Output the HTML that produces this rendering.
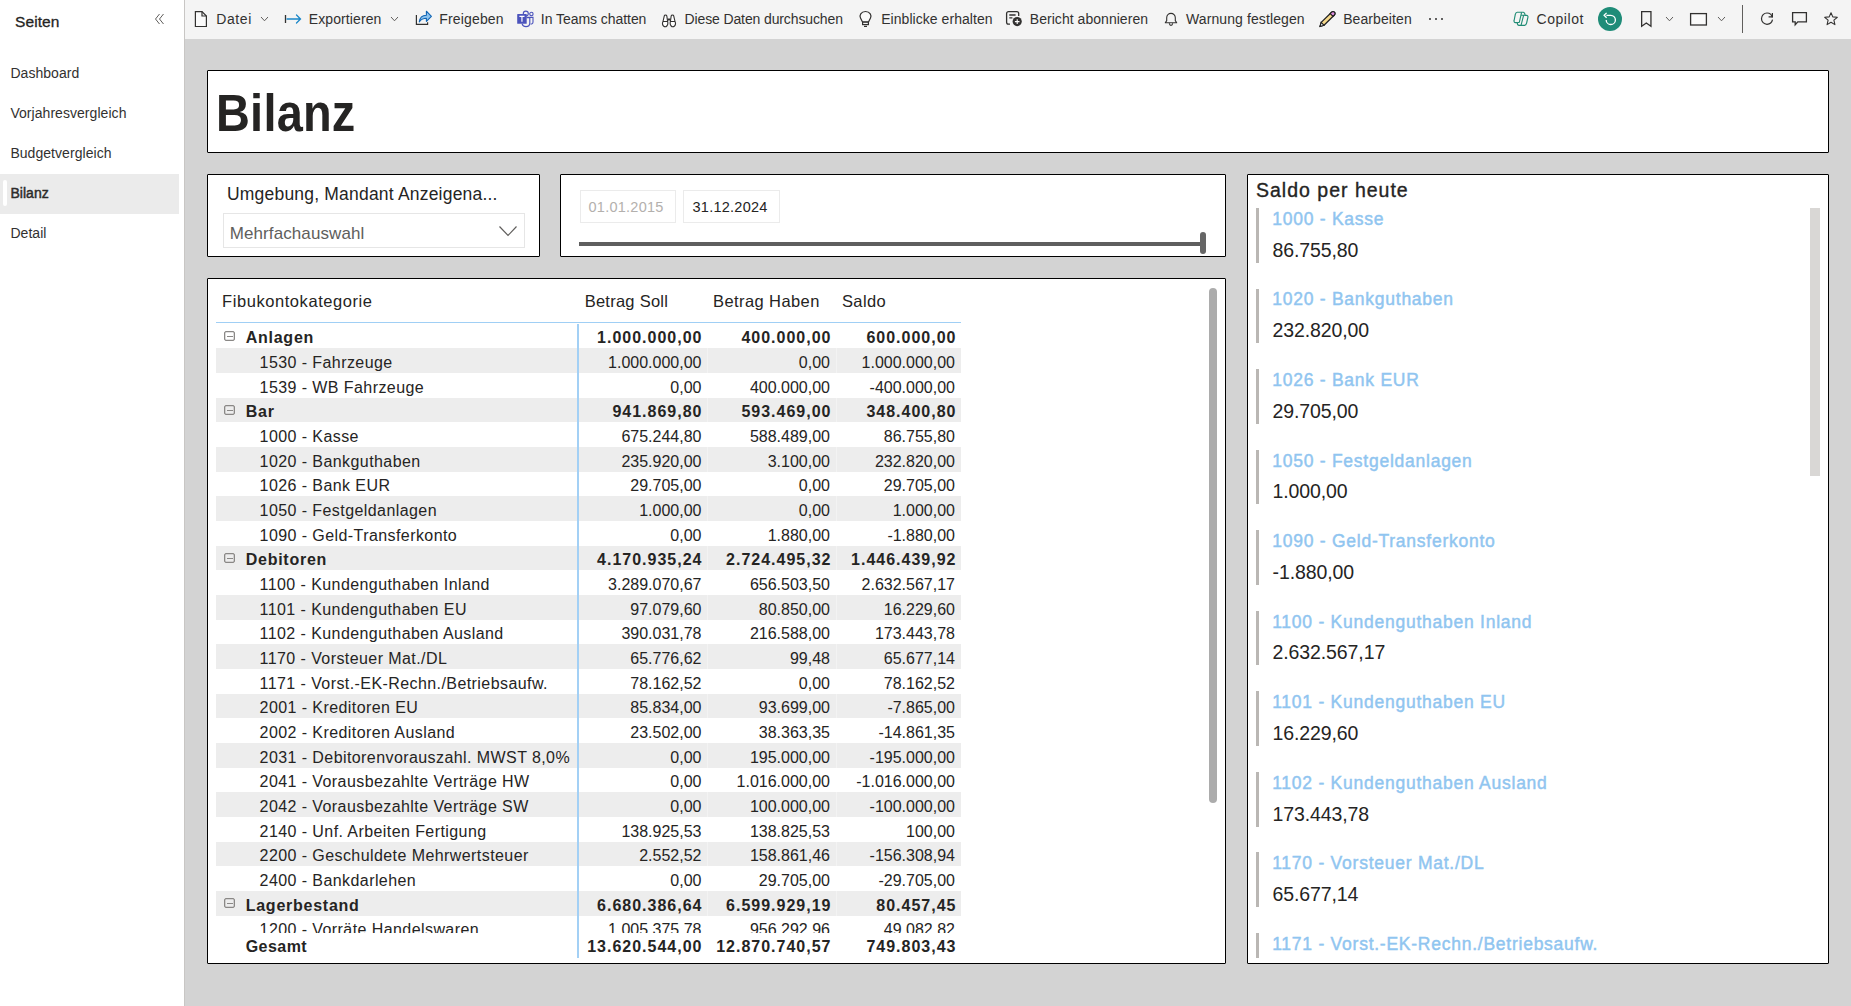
<!DOCTYPE html>
<html><head><meta charset="utf-8"><title>Bilanz</title>
<style>
html,body{margin:0;padding:0;width:1851px;height:1006px;overflow:hidden;background:#fff;font-family:"Liberation Sans", sans-serif;}
.t{position:absolute;white-space:nowrap;line-height:1;}
</style></head><body>
<div style="position:absolute;left:0px;top:0px;width:184px;height:1006px;background:#fff"></div><div style="position:absolute;left:184px;top:0px;width:1px;height:1006px;background:#c8c6c4"></div><div style="position:absolute;left:185px;top:0px;width:1666px;height:39px;background:#f4f4f4"></div><div style="position:absolute;left:185px;top:39px;width:1666px;height:967px;background:#d3d3d3"></div><div class="t" style="left:15.00px;top:13.78px;font-size:15.5px;font-weight:400;color:#252423;letter-spacing:0.1px;-webkit-text-stroke:0.3px #252423;">Seiten</div><svg style="position:absolute;left:154px;top:13px" width="11" height="12" viewBox="0 0 11 12"><path d="M5.5 1 L1.5 6 L5.5 11 M9.5 1 L5.5 6 L9.5 11" fill="none" stroke="#605e5c" stroke-width="1"/></svg><div style="position:absolute;left:0px;top:174px;width:179px;height:40px;background:#ebebeb"></div><div style="position:absolute;left:3px;top:180px;width:4px;height:26px;background:#fff;border-radius:2px"></div><div class="t" style="left:10.40px;top:65.95px;font-size:14px;font-weight:400;color:#323130;letter-spacing:0.05px;">Dashboard</div><div class="t" style="left:10.40px;top:105.95px;font-size:14px;font-weight:400;color:#323130;letter-spacing:0.05px;">Vorjahresvergleich</div><div class="t" style="left:10.40px;top:145.95px;font-size:14px;font-weight:400;color:#323130;letter-spacing:0.05px;">Budgetvergleich</div><div class="t" style="left:10.40px;top:186.15px;font-size:14px;font-weight:400;color:#323130;letter-spacing:0.05px;-webkit-text-stroke:0.45px #252423;">Bilanz</div><div class="t" style="left:10.40px;top:226.15px;font-size:14px;font-weight:400;color:#323130;letter-spacing:0.05px;">Detail</div><div class="t" style="left:216.20px;top:12.35px;font-size:14px;font-weight:400;color:#323130;letter-spacing:0.6px;">Datei</div><div class="t" style="left:308.80px;top:12.35px;font-size:14px;font-weight:400;color:#323130;letter-spacing:0.1px;">Exportieren</div><div class="t" style="left:439.30px;top:12.35px;font-size:14px;font-weight:400;color:#323130;letter-spacing:0.15px;">Freigeben</div><div class="t" style="left:540.80px;top:12.35px;font-size:14px;font-weight:400;color:#323130;letter-spacing:-0.05px;">In Teams chatten</div><div class="t" style="left:684.50px;top:12.35px;font-size:14px;font-weight:400;color:#323130;letter-spacing:-0.12px;">Diese Daten durchsuchen</div><div class="t" style="left:881.20px;top:12.35px;font-size:14px;font-weight:400;color:#323130;letter-spacing:0.05px;">Einblicke erhalten</div><div class="t" style="left:1029.80px;top:12.35px;font-size:14px;font-weight:400;color:#323130;letter-spacing:0.04px;">Bericht abonnieren</div><div class="t" style="left:1186.00px;top:12.35px;font-size:14px;font-weight:400;color:#323130;letter-spacing:0.1px;">Warnung festlegen</div><div class="t" style="left:1343.20px;top:12.35px;font-size:14px;font-weight:400;color:#323130;letter-spacing:0.09px;">Bearbeiten</div><div class="t" style="left:1536.50px;top:12.35px;font-size:14px;font-weight:400;color:#323130;letter-spacing:0.55px;">Copilot</div><svg style="position:absolute;left:260px;top:15.9px" width="9" height="5.8" viewBox="-1 -1 9 5.8"><path d="M0 0 L3.5 3.8 L7 0" fill="none" stroke="#605e5c" stroke-width="1"/></svg><svg style="position:absolute;left:390px;top:15.9px" width="9" height="5.8" viewBox="-1 -1 9 5.8"><path d="M0 0 L3.5 3.8 L7 0" fill="none" stroke="#605e5c" stroke-width="1"/></svg><svg style="position:absolute;left:1664.5px;top:15.9px" width="9" height="5.8" viewBox="-1 -1 9 5.8"><path d="M0 0 L3.5 3.8 L7 0" fill="none" stroke="#605e5c" stroke-width="1"/></svg><svg style="position:absolute;left:1716.5px;top:15.9px" width="9" height="5.8" viewBox="-1 -1 9 5.8"><path d="M0 0 L3.5 3.8 L7 0" fill="none" stroke="#605e5c" stroke-width="1"/></svg><svg style="position:absolute;left:194px;top:10px" width="15" height="18" viewBox="0 0 15 18"><path d="M1.4 1.6 H8 L12.4 6 V16.5 H1.4 Z" fill="#fafafa" stroke="#323130" stroke-width="1.2" stroke-linejoin="miter"/><path d="M8 1.6 V6 H12.4" fill="none" stroke="#323130" stroke-width="1.2"/></svg><svg style="position:absolute;left:284px;top:12px" width="19" height="14" viewBox="0 0 19 14"><path d="M1.5 3 V11" stroke="#323130" stroke-width="1.3"/><path d="M3 7 H16.5 M12.5 3 L16.5 7 L12.5 11" fill="none" stroke="#1a86c8" stroke-width="1.3" stroke-linecap="round"/></svg><svg style="position:absolute;left:414px;top:10px" width="19" height="17" viewBox="0 0 19 17"><path d="M2.4 5 V14.4 H13.6 V12.2" fill="none" stroke="#323130" stroke-width="1.2"/><path d="M5.3 11.8 C5.8 7.5 8.5 5.3 12.4 5.2 V1.2 L17.4 6.3 L12.4 11.3 V8.3 C9.2 8.3 7 9.6 5.3 11.8 Z" fill="#8cc3ef" stroke="#0f64b4" stroke-width="1.1" stroke-linejoin="round"/></svg><svg style="position:absolute;left:516px;top:10px" width="19" height="18" viewBox="0 0 19 18"><circle cx="9.8" cy="3.6" r="2.5" fill="none" stroke="#4b53bc" stroke-width="1.15"/><circle cx="15.4" cy="4" r="1.7" fill="none" stroke="#4b53bc" stroke-width="1.1"/><path d="M11.5 7.4 H17 V12 C17 13.4 15.8 14.2 14.5 14" fill="none" stroke="#4b53bc" stroke-width="1.1"/><path d="M10.5 7.6 H13.8 V13 C13.8 15.2 12 16.6 10 16.6 C8 16.6 6.6 15.4 6.1 13.8" fill="none" stroke="#4b53bc" stroke-width="1.15"/><rect x="1.2" y="4" width="9.5" height="9.8" fill="#4b53bc" rx="0.6"/><path d="M3.4 6.3 H8.5 M5.95 6.3 V11.8" stroke="#fff" stroke-width="1.2"/></svg><svg style="position:absolute;left:661px;top:14px" width="16" height="14" viewBox="0 0 16 14"><path d="M2 7.5 L3.3 1.8 C3.5 0.8 5.5 0.8 5.8 1.8 L6.6 7.5 M6.6 7.5 C7 9 6.8 11 5.8 12 C5 12.8 3.5 12.8 2.5 12 C1.5 11 1.3 9 2 7.5 Z M9.4 7.5 L10.2 1.8 C10.5 0.8 12.5 0.8 12.7 1.8 L14 7.5 M14 7.5 C14.7 9 14.5 11 13.5 12 C12.5 12.8 11 12.8 10.2 12 C9.2 11 9 9 9.4 7.5 Z M2 7.5 H6.6 M9.4 7.5 H14" fill="#fff" stroke="#323130" stroke-width="1.1"/><rect x="6.6" y="4.5" width="2.8" height="2" fill="#323130"/></svg><svg style="position:absolute;left:858px;top:10px" width="15" height="18" viewBox="0 0 15 18"><path d="M4.5 12 L2.5 8 C1.2 5.5 2.8 1.5 7.5 1.5 C12.2 1.5 13.8 5.5 12.5 8 L10.5 12 Z" fill="#fafafa" stroke="#323130" stroke-width="1.2" stroke-linejoin="round"/><rect x="4.6" y="12" width="5.8" height="2.6" fill="none" stroke="#323130" stroke-width="1.2"/><path d="M6 16.4 H9" stroke="#323130" stroke-width="1.2"/></svg><svg style="position:absolute;left:1005px;top:10px" width="19" height="18" viewBox="0 0 19 18"><path d="M5 14.2 H3.5 C2.5 14.2 1.6 13.3 1.6 12.3 V3.6 C1.6 2.6 2.5 1.7 3.5 1.7 H11.8 C12.8 1.7 13.7 2.6 13.7 3.6 V6" fill="none" stroke="#323130" stroke-width="1.3"/><path d="M4.3 5 H10.6 M4.3 7.8 H7.4" stroke="#323130" stroke-width="1.3"/><circle cx="12.2" cy="11.6" r="4.6" fill="#323130"/><path d="M12.2 9.3 V13.9 M9.9 11.6 H14.5" stroke="#fff" stroke-width="1.1"/></svg><svg style="position:absolute;left:1164px;top:12px" width="14" height="15" viewBox="0 0 14 15"><path d="M1.3 10.8 H12.7 L11.3 8.6 V5.8 C11.3 3.3 9.4 1.4 7 1.4 C4.6 1.4 2.7 3.3 2.7 5.8 V8.6 Z" fill="none" stroke="#323130" stroke-width="1.1" stroke-linejoin="round"/><path d="M5.3 11.3 C5.5 12.8 6.2 13.4 7 13.4 C7.8 13.4 8.5 12.8 8.7 11.3" fill="none" stroke="#323130" stroke-width="1.1"/></svg><svg style="position:absolute;left:1318px;top:10px" width="19" height="18" viewBox="0 0 19 18"><path d="M2 16.5 L3.2 12.4 L13.6 2.2 C14.4 1.4 15.6 1.4 16.4 2.2 C17.2 3 17.2 4.2 16.4 5 L6 15.3 Z" fill="#f7d98b" stroke="#1f1f1f" stroke-width="1.2" stroke-linejoin="round"/><path d="M13.6 2.2 C14.4 1.4 15.6 1.4 16.4 2.2 C17.2 3 17.2 4.2 16.4 5 L15 6.4 L12.2 3.6 Z" fill="#e08de0" stroke="#1f1f1f" stroke-width="1.2"/><path d="M3.2 12.4 L6 15.3 L2 16.5 Z" fill="#fff" stroke="#1f1f1f" stroke-width="1.1"/></svg><div style="position:absolute;left:1429px;top:18px;width:2.4px;height:2.4px;background:#323130;border-radius:50%"></div><div style="position:absolute;left:1435px;top:18px;width:2.4px;height:2.4px;background:#323130;border-radius:50%"></div><div style="position:absolute;left:1441px;top:18px;width:2.4px;height:2.4px;background:#323130;border-radius:50%"></div><svg style="position:absolute;left:1508px;top:6px" width="26" height="26" viewBox="0 0 26 26"><path d="M9.2 6.2 H15.2 C16.2 6.2 16.9 7.2 17.2 9.3 H18.6 C19.6 9.3 20.2 10.3 19.9 11.4 L18.6 17.2 C18.3 18.5 17.6 19.4 16.4 19.4 H10.9 C10 19.4 9.4 18.4 9.2 16.6 H7.4 C6.4 16.6 5.8 15.6 6.1 14.5 L7.3 8.4 C7.6 7 8.2 6.2 9.2 6.2 Z" fill="none" stroke="#1f8c74" stroke-width="1.15" stroke-linejoin="round"/><path d="M13.6 6.4 L11.3 16.4 M15.6 9.4 L13.1 19.2 M13.2 9.3 H17.2 M9.2 16.5 H11.5" fill="none" stroke="#1f8c74" stroke-width="1.1"/></svg><svg style="position:absolute;left:1598px;top:7px" width="24" height="24" viewBox="0 0 24 24"><circle cx="12" cy="12" r="12" fill="#1f8c78"/><path d="M8.4 8.3 H12.8 A4.6 4.6 0 1 1 8.2 12.9" fill="none" stroke="#fff" stroke-width="1.3"/><path d="M8.6 5.9 L6.1 8.3 L8.6 10.7" fill="none" stroke="#fff" stroke-width="1.3"/></svg><svg style="position:absolute;left:1640px;top:10px" width="13" height="18" viewBox="0 0 13 18"><path d="M1.65 1.65 H10.95 V16.2 L6.3 13 L1.65 16.2 Z" fill="none" stroke="#323130" stroke-width="1.3" stroke-linejoin="miter"/></svg><svg style="position:absolute;left:1689px;top:12px" width="19" height="15" viewBox="0 0 19 15"><rect x="1.6" y="1.6" width="15.8" height="11.4" fill="#fafafa" stroke="#323130" stroke-width="1.3"/></svg><div style="position:absolute;left:1742px;top:5px;width:1px;height:28px;background:#605e5c"></div><svg style="position:absolute;left:1759px;top:11px" width="16" height="16" viewBox="0 0 16 16"><path d="M13.3 6.3 C12.8 3.8 10.7 2 8 2 C5 2 2.5 4.5 2.5 7.7 C2.5 10.8 5 13.3 8 13.3 C10.8 13.3 13 11.3 13.5 8.7" fill="none" stroke="#323130" stroke-width="1.2"/><path d="M13.4 2 V5.8 H9.6" fill="none" stroke="#323130" stroke-width="1.2"/></svg><svg style="position:absolute;left:1791px;top:11px" width="17" height="16" viewBox="0 0 17 16"><path d="M1.6 1.6 H15.4 V10.8 H6.8 L4.2 13.8 V10.8 H1.6 Z" fill="none" stroke="#323130" stroke-width="1.3" stroke-linejoin="miter"/></svg><svg style="position:absolute;left:1823px;top:11px" width="16" height="16" viewBox="0 0 16 16"><path d="M8 1.8 L9.8 5.9 L14.3 6.3 L10.9 9.2 L11.9 13.6 L8 11.3 L4.1 13.6 L5.1 9.2 L1.7 6.3 L6.2 5.9 Z" fill="none" stroke="#323130" stroke-width="1.1" stroke-linejoin="round"/></svg><div style="position:absolute;left:207px;top:70px;width:1622px;height:83px;background:#fff;border:1px solid #000;box-sizing:border-box;border-radius:1px"></div><div class="t" style="left:216.30px;top:87.63px;font-size:51px;font-weight:700;color:#252423;letter-spacing:0.25px;transform:scaleX(0.92);transform-origin:0 0;">Bilanz</div><div style="position:absolute;left:207px;top:174px;width:333px;height:83px;background:#fff;border:1px solid #000;box-sizing:border-box;border-radius:1px"></div><div class="t" style="left:227.00px;top:185.69px;font-size:17.5px;font-weight:400;color:#252423;letter-spacing:0.2px;">Umgebung, Mandant Anzeigena...</div><div style="position:absolute;left:223px;top:213px;width:302px;height:35px;border:1px solid #e6e6e6;box-sizing:border-box"></div><div class="t" style="left:229.70px;top:224.61px;font-size:17px;font-weight:400;color:#605e5c;letter-spacing:0.1px;">Mehrfachauswahl</div><svg style="position:absolute;left:498px;top:225px" width="20" height="13" viewBox="0 0 20 13"><path d="M1.5 1.5 L10 10.5 L18.5 1.5" fill="none" stroke="#605e5c" stroke-width="1.2"/></svg><div style="position:absolute;left:560px;top:174px;width:666px;height:83px;background:#fff;border:1px solid #000;box-sizing:border-box;border-radius:1px"></div><div style="position:absolute;left:579.5px;top:189.7px;width:96.3px;height:33.5px;border:1px solid #ebebeb;box-sizing:border-box"></div><div style="position:absolute;left:683.4px;top:189.7px;width:96.3px;height:33.5px;border:1px solid #ebebeb;box-sizing:border-box"></div><div class="t" style="left:588.50px;top:200.23px;font-size:14.5px;font-weight:400;color:#b3b0ad;letter-spacing:0.25px;">01.01.2015</div><div class="t" style="left:692.50px;top:200.23px;font-size:14.5px;font-weight:400;color:#252423;letter-spacing:0.25px;">31.12.2024</div><div style="position:absolute;left:579px;top:241.6px;width:624px;height:4px;background:#5f5f5f"></div><div style="position:absolute;left:1200px;top:232.4px;width:6px;height:22px;background:#666;border-radius:3px"></div><div style="position:absolute;left:207px;top:278px;width:1019px;height:686px;background:#fff;border:1px solid #000;box-sizing:border-box;border-radius:1px"></div><div class="t" style="left:222.00px;top:293.03px;font-size:16.5px;font-weight:400;color:#252423;letter-spacing:0.57px;">Fibukontokategorie</div><div class="t" style="left:584.70px;top:293.03px;font-size:16.5px;font-weight:400;color:#252423;letter-spacing:0.25px;">Betrag Soll</div><div class="t" style="left:713.10px;top:293.03px;font-size:16.5px;font-weight:400;color:#252423;letter-spacing:0.4px;">Betrag Haben</div><div class="t" style="left:842.00px;top:293.03px;font-size:16.5px;font-weight:400;color:#252423;letter-spacing:0.35px;">Saldo</div><div style="position:absolute;left:216px;top:321.8px;width:745px;height:1.6px;background:#a0cff5"></div><div style="position:absolute;left:0;top:323px;width:1851px;height:610px;overflow:hidden"><div style="position:absolute;left:224px;top:7.90px;width:11px;height:10.2px;border:1px solid #8a8886;box-sizing:border-box;border-radius:2px;box-shadow:inset 0 0 0 0.3px #8a8886"></div><div style="position:absolute;left:226.5px;top:12.70px;width:6px;height:1px;background:#8a8886"></div><div class="t" style="left:245.70px;top:7.16px;font-size:16px;font-weight:700;color:#252423;letter-spacing:0.75px">Anlagen</div><div class="t" style="right:1148.50px;top:7.16px;font-size:16px;font-weight:700;color:#252423;letter-spacing:1.0px">1.000.000,00</div><div class="t" style="right:1019.50px;top:7.16px;font-size:16px;font-weight:700;color:#252423;letter-spacing:1.0px">400.000,00</div><div class="t" style="right:894.50px;top:7.16px;font-size:16px;font-weight:700;color:#252423;letter-spacing:1.0px">600.000,00</div><div style="position:absolute;left:216px;top:25.37px;width:745px;height:24.67px;background:#ededed"></div><div style="position:absolute;left:707px;top:25.37px;width:1px;height:24.67px;background:#f3f3f3"></div><div style="position:absolute;left:836px;top:25.37px;width:1px;height:24.67px;background:#f3f3f3"></div><div class="t" style="left:259.60px;top:31.83px;font-size:16px;font-weight:400;color:#252423;letter-spacing:0.42px">1530 - Fahrzeuge</div><div class="t" style="right:1149.50px;top:31.83px;font-size:16px;font-weight:400;color:#252423;letter-spacing:0px">1.000.000,00</div><div class="t" style="right:1021.00px;top:31.83px;font-size:16px;font-weight:400;color:#252423;letter-spacing:0px">0,00</div><div class="t" style="right:896.00px;top:31.83px;font-size:16px;font-weight:400;color:#252423;letter-spacing:0px">1.000.000,00</div><div class="t" style="left:259.60px;top:56.50px;font-size:16px;font-weight:400;color:#252423;letter-spacing:0.42px">1539 - WB Fahrzeuge</div><div class="t" style="right:1149.50px;top:56.50px;font-size:16px;font-weight:400;color:#252423;letter-spacing:0px">0,00</div><div class="t" style="right:1021.00px;top:56.50px;font-size:16px;font-weight:400;color:#252423;letter-spacing:0px">400.000,00</div><div class="t" style="right:896.00px;top:56.50px;font-size:16px;font-weight:400;color:#252423;letter-spacing:0px">-400.000,00</div><div style="position:absolute;left:216px;top:74.71px;width:745px;height:24.67px;background:#ededed"></div><div style="position:absolute;left:707px;top:74.71px;width:1px;height:24.67px;background:#f3f3f3"></div><div style="position:absolute;left:836px;top:74.71px;width:1px;height:24.67px;background:#f3f3f3"></div><div style="position:absolute;left:224px;top:81.91px;width:11px;height:10.2px;border:1px solid #8a8886;box-sizing:border-box;border-radius:2px;box-shadow:inset 0 0 0 0.3px #8a8886"></div><div style="position:absolute;left:226.5px;top:86.71px;width:6px;height:1px;background:#8a8886"></div><div class="t" style="left:245.70px;top:81.17px;font-size:16px;font-weight:700;color:#252423;letter-spacing:0.75px">Bar</div><div class="t" style="right:1148.50px;top:81.17px;font-size:16px;font-weight:700;color:#252423;letter-spacing:1.0px">941.869,80</div><div class="t" style="right:1019.50px;top:81.17px;font-size:16px;font-weight:700;color:#252423;letter-spacing:1.0px">593.469,00</div><div class="t" style="right:894.50px;top:81.17px;font-size:16px;font-weight:700;color:#252423;letter-spacing:1.0px">348.400,80</div><div class="t" style="left:259.60px;top:105.84px;font-size:16px;font-weight:400;color:#252423;letter-spacing:0.42px">1000 - Kasse</div><div class="t" style="right:1149.50px;top:105.84px;font-size:16px;font-weight:400;color:#252423;letter-spacing:0px">675.244,80</div><div class="t" style="right:1021.00px;top:105.84px;font-size:16px;font-weight:400;color:#252423;letter-spacing:0px">588.489,00</div><div class="t" style="right:896.00px;top:105.84px;font-size:16px;font-weight:400;color:#252423;letter-spacing:0px">86.755,80</div><div style="position:absolute;left:216px;top:124.05px;width:745px;height:24.67px;background:#ededed"></div><div style="position:absolute;left:707px;top:124.05px;width:1px;height:24.67px;background:#f3f3f3"></div><div style="position:absolute;left:836px;top:124.05px;width:1px;height:24.67px;background:#f3f3f3"></div><div class="t" style="left:259.60px;top:130.51px;font-size:16px;font-weight:400;color:#252423;letter-spacing:0.42px">1020 - Bankguthaben</div><div class="t" style="right:1149.50px;top:130.51px;font-size:16px;font-weight:400;color:#252423;letter-spacing:0px">235.920,00</div><div class="t" style="right:1021.00px;top:130.51px;font-size:16px;font-weight:400;color:#252423;letter-spacing:0px">3.100,00</div><div class="t" style="right:896.00px;top:130.51px;font-size:16px;font-weight:400;color:#252423;letter-spacing:0px">232.820,00</div><div class="t" style="left:259.60px;top:155.18px;font-size:16px;font-weight:400;color:#252423;letter-spacing:0.42px">1026 - Bank EUR</div><div class="t" style="right:1149.50px;top:155.18px;font-size:16px;font-weight:400;color:#252423;letter-spacing:0px">29.705,00</div><div class="t" style="right:1021.00px;top:155.18px;font-size:16px;font-weight:400;color:#252423;letter-spacing:0px">0,00</div><div class="t" style="right:896.00px;top:155.18px;font-size:16px;font-weight:400;color:#252423;letter-spacing:0px">29.705,00</div><div style="position:absolute;left:216px;top:173.39px;width:745px;height:24.67px;background:#ededed"></div><div style="position:absolute;left:707px;top:173.39px;width:1px;height:24.67px;background:#f3f3f3"></div><div style="position:absolute;left:836px;top:173.39px;width:1px;height:24.67px;background:#f3f3f3"></div><div class="t" style="left:259.60px;top:179.85px;font-size:16px;font-weight:400;color:#252423;letter-spacing:0.42px">1050 - Festgeldanlagen</div><div class="t" style="right:1149.50px;top:179.85px;font-size:16px;font-weight:400;color:#252423;letter-spacing:0px">1.000,00</div><div class="t" style="right:1021.00px;top:179.85px;font-size:16px;font-weight:400;color:#252423;letter-spacing:0px">0,00</div><div class="t" style="right:896.00px;top:179.85px;font-size:16px;font-weight:400;color:#252423;letter-spacing:0px">1.000,00</div><div class="t" style="left:259.60px;top:204.52px;font-size:16px;font-weight:400;color:#252423;letter-spacing:0.42px">1090 - Geld-Transferkonto</div><div class="t" style="right:1149.50px;top:204.52px;font-size:16px;font-weight:400;color:#252423;letter-spacing:0px">0,00</div><div class="t" style="right:1021.00px;top:204.52px;font-size:16px;font-weight:400;color:#252423;letter-spacing:0px">1.880,00</div><div class="t" style="right:896.00px;top:204.52px;font-size:16px;font-weight:400;color:#252423;letter-spacing:0px">-1.880,00</div><div style="position:absolute;left:216px;top:222.73px;width:745px;height:24.67px;background:#ededed"></div><div style="position:absolute;left:707px;top:222.73px;width:1px;height:24.67px;background:#f3f3f3"></div><div style="position:absolute;left:836px;top:222.73px;width:1px;height:24.67px;background:#f3f3f3"></div><div style="position:absolute;left:224px;top:229.93px;width:11px;height:10.2px;border:1px solid #8a8886;box-sizing:border-box;border-radius:2px;box-shadow:inset 0 0 0 0.3px #8a8886"></div><div style="position:absolute;left:226.5px;top:234.73px;width:6px;height:1px;background:#8a8886"></div><div class="t" style="left:245.70px;top:229.19px;font-size:16px;font-weight:700;color:#252423;letter-spacing:0.75px">Debitoren</div><div class="t" style="right:1148.50px;top:229.19px;font-size:16px;font-weight:700;color:#252423;letter-spacing:1.0px">4.170.935,24</div><div class="t" style="right:1019.50px;top:229.19px;font-size:16px;font-weight:700;color:#252423;letter-spacing:1.0px">2.724.495,32</div><div class="t" style="right:894.50px;top:229.19px;font-size:16px;font-weight:700;color:#252423;letter-spacing:1.0px">1.446.439,92</div><div class="t" style="left:259.60px;top:253.86px;font-size:16px;font-weight:400;color:#252423;letter-spacing:0.42px">1100 - Kundenguthaben Inland</div><div class="t" style="right:1149.50px;top:253.86px;font-size:16px;font-weight:400;color:#252423;letter-spacing:0px">3.289.070,67</div><div class="t" style="right:1021.00px;top:253.86px;font-size:16px;font-weight:400;color:#252423;letter-spacing:0px">656.503,50</div><div class="t" style="right:896.00px;top:253.86px;font-size:16px;font-weight:400;color:#252423;letter-spacing:0px">2.632.567,17</div><div style="position:absolute;left:216px;top:272.07px;width:745px;height:24.67px;background:#ededed"></div><div style="position:absolute;left:707px;top:272.07px;width:1px;height:24.67px;background:#f3f3f3"></div><div style="position:absolute;left:836px;top:272.07px;width:1px;height:24.67px;background:#f3f3f3"></div><div class="t" style="left:259.60px;top:278.53px;font-size:16px;font-weight:400;color:#252423;letter-spacing:0.42px">1101 - Kundenguthaben EU</div><div class="t" style="right:1149.50px;top:278.53px;font-size:16px;font-weight:400;color:#252423;letter-spacing:0px">97.079,60</div><div class="t" style="right:1021.00px;top:278.53px;font-size:16px;font-weight:400;color:#252423;letter-spacing:0px">80.850,00</div><div class="t" style="right:896.00px;top:278.53px;font-size:16px;font-weight:400;color:#252423;letter-spacing:0px">16.229,60</div><div class="t" style="left:259.60px;top:303.20px;font-size:16px;font-weight:400;color:#252423;letter-spacing:0.42px">1102 - Kundenguthaben Ausland</div><div class="t" style="right:1149.50px;top:303.20px;font-size:16px;font-weight:400;color:#252423;letter-spacing:0px">390.031,78</div><div class="t" style="right:1021.00px;top:303.20px;font-size:16px;font-weight:400;color:#252423;letter-spacing:0px">216.588,00</div><div class="t" style="right:896.00px;top:303.20px;font-size:16px;font-weight:400;color:#252423;letter-spacing:0px">173.443,78</div><div style="position:absolute;left:216px;top:321.41px;width:745px;height:24.67px;background:#ededed"></div><div style="position:absolute;left:707px;top:321.41px;width:1px;height:24.67px;background:#f3f3f3"></div><div style="position:absolute;left:836px;top:321.41px;width:1px;height:24.67px;background:#f3f3f3"></div><div class="t" style="left:259.60px;top:327.87px;font-size:16px;font-weight:400;color:#252423;letter-spacing:0.42px">1170 - Vorsteuer Mat./DL</div><div class="t" style="right:1149.50px;top:327.87px;font-size:16px;font-weight:400;color:#252423;letter-spacing:0px">65.776,62</div><div class="t" style="right:1021.00px;top:327.87px;font-size:16px;font-weight:400;color:#252423;letter-spacing:0px">99,48</div><div class="t" style="right:896.00px;top:327.87px;font-size:16px;font-weight:400;color:#252423;letter-spacing:0px">65.677,14</div><div class="t" style="left:259.60px;top:352.54px;font-size:16px;font-weight:400;color:#252423;letter-spacing:0.42px">1171 - Vorst.-EK-Rechn./Betriebsaufw.</div><div class="t" style="right:1149.50px;top:352.54px;font-size:16px;font-weight:400;color:#252423;letter-spacing:0px">78.162,52</div><div class="t" style="right:1021.00px;top:352.54px;font-size:16px;font-weight:400;color:#252423;letter-spacing:0px">0,00</div><div class="t" style="right:896.00px;top:352.54px;font-size:16px;font-weight:400;color:#252423;letter-spacing:0px">78.162,52</div><div style="position:absolute;left:216px;top:370.75px;width:745px;height:24.67px;background:#ededed"></div><div style="position:absolute;left:707px;top:370.75px;width:1px;height:24.67px;background:#f3f3f3"></div><div style="position:absolute;left:836px;top:370.75px;width:1px;height:24.67px;background:#f3f3f3"></div><div class="t" style="left:259.60px;top:377.21px;font-size:16px;font-weight:400;color:#252423;letter-spacing:0.42px">2001 - Kreditoren EU</div><div class="t" style="right:1149.50px;top:377.21px;font-size:16px;font-weight:400;color:#252423;letter-spacing:0px">85.834,00</div><div class="t" style="right:1021.00px;top:377.21px;font-size:16px;font-weight:400;color:#252423;letter-spacing:0px">93.699,00</div><div class="t" style="right:896.00px;top:377.21px;font-size:16px;font-weight:400;color:#252423;letter-spacing:0px">-7.865,00</div><div class="t" style="left:259.60px;top:401.88px;font-size:16px;font-weight:400;color:#252423;letter-spacing:0.42px">2002 - Kreditoren Ausland</div><div class="t" style="right:1149.50px;top:401.88px;font-size:16px;font-weight:400;color:#252423;letter-spacing:0px">23.502,00</div><div class="t" style="right:1021.00px;top:401.88px;font-size:16px;font-weight:400;color:#252423;letter-spacing:0px">38.363,35</div><div class="t" style="right:896.00px;top:401.88px;font-size:16px;font-weight:400;color:#252423;letter-spacing:0px">-14.861,35</div><div style="position:absolute;left:216px;top:420.09px;width:745px;height:24.67px;background:#ededed"></div><div style="position:absolute;left:707px;top:420.09px;width:1px;height:24.67px;background:#f3f3f3"></div><div style="position:absolute;left:836px;top:420.09px;width:1px;height:24.67px;background:#f3f3f3"></div><div class="t" style="left:259.60px;top:426.55px;font-size:16px;font-weight:400;color:#252423;letter-spacing:0.42px">2031 - Debitorenvorauszahl. MWST 8,0%</div><div class="t" style="right:1149.50px;top:426.55px;font-size:16px;font-weight:400;color:#252423;letter-spacing:0px">0,00</div><div class="t" style="right:1021.00px;top:426.55px;font-size:16px;font-weight:400;color:#252423;letter-spacing:0px">195.000,00</div><div class="t" style="right:896.00px;top:426.55px;font-size:16px;font-weight:400;color:#252423;letter-spacing:0px">-195.000,00</div><div class="t" style="left:259.60px;top:451.22px;font-size:16px;font-weight:400;color:#252423;letter-spacing:0.42px">2041 - Vorausbezahlte Verträge HW</div><div class="t" style="right:1149.50px;top:451.22px;font-size:16px;font-weight:400;color:#252423;letter-spacing:0px">0,00</div><div class="t" style="right:1021.00px;top:451.22px;font-size:16px;font-weight:400;color:#252423;letter-spacing:0px">1.016.000,00</div><div class="t" style="right:896.00px;top:451.22px;font-size:16px;font-weight:400;color:#252423;letter-spacing:0px">-1.016.000,00</div><div style="position:absolute;left:216px;top:469.43px;width:745px;height:24.67px;background:#ededed"></div><div style="position:absolute;left:707px;top:469.43px;width:1px;height:24.67px;background:#f3f3f3"></div><div style="position:absolute;left:836px;top:469.43px;width:1px;height:24.67px;background:#f3f3f3"></div><div class="t" style="left:259.60px;top:475.89px;font-size:16px;font-weight:400;color:#252423;letter-spacing:0.42px">2042 - Vorausbezahlte Verträge SW</div><div class="t" style="right:1149.50px;top:475.89px;font-size:16px;font-weight:400;color:#252423;letter-spacing:0px">0,00</div><div class="t" style="right:1021.00px;top:475.89px;font-size:16px;font-weight:400;color:#252423;letter-spacing:0px">100.000,00</div><div class="t" style="right:896.00px;top:475.89px;font-size:16px;font-weight:400;color:#252423;letter-spacing:0px">-100.000,00</div><div class="t" style="left:259.60px;top:500.56px;font-size:16px;font-weight:400;color:#252423;letter-spacing:0.42px">2140 - Unf. Arbeiten Fertigung</div><div class="t" style="right:1149.50px;top:500.56px;font-size:16px;font-weight:400;color:#252423;letter-spacing:0px">138.925,53</div><div class="t" style="right:1021.00px;top:500.56px;font-size:16px;font-weight:400;color:#252423;letter-spacing:0px">138.825,53</div><div class="t" style="right:896.00px;top:500.56px;font-size:16px;font-weight:400;color:#252423;letter-spacing:0px">100,00</div><div style="position:absolute;left:216px;top:518.77px;width:745px;height:24.67px;background:#ededed"></div><div style="position:absolute;left:707px;top:518.77px;width:1px;height:24.67px;background:#f3f3f3"></div><div style="position:absolute;left:836px;top:518.77px;width:1px;height:24.67px;background:#f3f3f3"></div><div class="t" style="left:259.60px;top:525.23px;font-size:16px;font-weight:400;color:#252423;letter-spacing:0.42px">2200 - Geschuldete Mehrwertsteuer</div><div class="t" style="right:1149.50px;top:525.23px;font-size:16px;font-weight:400;color:#252423;letter-spacing:0px">2.552,52</div><div class="t" style="right:1021.00px;top:525.23px;font-size:16px;font-weight:400;color:#252423;letter-spacing:0px">158.861,46</div><div class="t" style="right:896.00px;top:525.23px;font-size:16px;font-weight:400;color:#252423;letter-spacing:0px">-156.308,94</div><div class="t" style="left:259.60px;top:549.90px;font-size:16px;font-weight:400;color:#252423;letter-spacing:0.42px">2400 - Bankdarlehen</div><div class="t" style="right:1149.50px;top:549.90px;font-size:16px;font-weight:400;color:#252423;letter-spacing:0px">0,00</div><div class="t" style="right:1021.00px;top:549.90px;font-size:16px;font-weight:400;color:#252423;letter-spacing:0px">29.705,00</div><div class="t" style="right:896.00px;top:549.90px;font-size:16px;font-weight:400;color:#252423;letter-spacing:0px">-29.705,00</div><div style="position:absolute;left:216px;top:568.11px;width:745px;height:24.67px;background:#ededed"></div><div style="position:absolute;left:707px;top:568.11px;width:1px;height:24.67px;background:#f3f3f3"></div><div style="position:absolute;left:836px;top:568.11px;width:1px;height:24.67px;background:#f3f3f3"></div><div style="position:absolute;left:224px;top:575.31px;width:11px;height:10.2px;border:1px solid #8a8886;box-sizing:border-box;border-radius:2px;box-shadow:inset 0 0 0 0.3px #8a8886"></div><div style="position:absolute;left:226.5px;top:580.11px;width:6px;height:1px;background:#8a8886"></div><div class="t" style="left:245.70px;top:574.57px;font-size:16px;font-weight:700;color:#252423;letter-spacing:0.75px">Lagerbestand</div><div class="t" style="right:1148.50px;top:574.57px;font-size:16px;font-weight:700;color:#252423;letter-spacing:1.0px">6.680.386,64</div><div class="t" style="right:1019.50px;top:574.57px;font-size:16px;font-weight:700;color:#252423;letter-spacing:1.0px">6.599.929,19</div><div class="t" style="right:894.50px;top:574.57px;font-size:16px;font-weight:700;color:#252423;letter-spacing:1.0px">80.457,45</div><div class="t" style="left:259.60px;top:599.24px;font-size:16px;font-weight:400;color:#252423;letter-spacing:0.42px">1200 - Vorräte Handelswaren</div><div class="t" style="right:1149.50px;top:599.24px;font-size:16px;font-weight:400;color:#252423;letter-spacing:0px">1.005.375,78</div><div class="t" style="right:1021.00px;top:599.24px;font-size:16px;font-weight:400;color:#252423;letter-spacing:0px">956.292,96</div><div class="t" style="right:896.00px;top:599.24px;font-size:16px;font-weight:400;color:#252423;letter-spacing:0px">49.082,82</div></div><div class="t" style="left:245.70px;top:939.26px;font-size:16px;font-weight:700;color:#252423;letter-spacing:0.45px;">Gesamt</div><div class="t" style="right:1148.50px;top:939.26px;font-size:16px;font-weight:700;color:#252423;letter-spacing:1.0px;">13.620.544,00</div><div class="t" style="right:1019.50px;top:939.26px;font-size:16px;font-weight:700;color:#252423;letter-spacing:1.0px;">12.870.740,57</div><div class="t" style="right:894.50px;top:939.26px;font-size:16px;font-weight:700;color:#252423;letter-spacing:1.0px;">749.803,43</div><div style="position:absolute;left:577.3px;top:324px;width:1.9px;height:634px;background:#a3d0f5"></div><div style="position:absolute;left:1209px;top:288px;width:8px;height:515px;background:#acacac;border-radius:4px"></div><div style="position:absolute;left:1247px;top:174px;width:582px;height:790px;background:#fff;border:1px solid #000;box-sizing:border-box;border-radius:1px"></div><div class="t" style="left:1256.00px;top:180.89px;font-size:19.5px;font-weight:400;color:#252423;letter-spacing:1.0px;-webkit-text-stroke:0.35px #252423;">Saldo per heute</div><div style="position:absolute;left:0;top:205px;width:1851px;height:753px;overflow:hidden"><div style="position:absolute;left:1256px;top:3.00px;width:3px;height:54.6px;background:#bab7b4"></div><div class="t" style="left:1272.2px;top:5.89px;font-size:17.5px;font-weight:400;color:#90c5f0;letter-spacing:0.75px;-webkit-text-stroke:0.45px #90c5f0">1000 - Kasse</div><div class="t" style="left:1272.5px;top:35.59px;font-size:19.5px;font-weight:400;color:#252423;letter-spacing:-0.1px;">86.755,80</div><div style="position:absolute;left:1256px;top:83.56px;width:3px;height:54.6px;background:#bab7b4"></div><div class="t" style="left:1272.2px;top:86.45px;font-size:17.5px;font-weight:400;color:#90c5f0;letter-spacing:0.75px;-webkit-text-stroke:0.45px #90c5f0">1020 - Bankguthaben</div><div class="t" style="left:1272.5px;top:116.15px;font-size:19.5px;font-weight:400;color:#252423;letter-spacing:-0.1px;">232.820,00</div><div style="position:absolute;left:1256px;top:164.12px;width:3px;height:54.6px;background:#bab7b4"></div><div class="t" style="left:1272.2px;top:167.01px;font-size:17.5px;font-weight:400;color:#90c5f0;letter-spacing:0.75px;-webkit-text-stroke:0.45px #90c5f0">1026 - Bank EUR</div><div class="t" style="left:1272.5px;top:196.71px;font-size:19.5px;font-weight:400;color:#252423;letter-spacing:-0.1px;">29.705,00</div><div style="position:absolute;left:1256px;top:244.68px;width:3px;height:54.6px;background:#bab7b4"></div><div class="t" style="left:1272.2px;top:247.57px;font-size:17.5px;font-weight:400;color:#90c5f0;letter-spacing:0.75px;-webkit-text-stroke:0.45px #90c5f0">1050 - Festgeldanlagen</div><div class="t" style="left:1272.5px;top:277.27px;font-size:19.5px;font-weight:400;color:#252423;letter-spacing:-0.1px;">1.000,00</div><div style="position:absolute;left:1256px;top:325.24px;width:3px;height:54.6px;background:#bab7b4"></div><div class="t" style="left:1272.2px;top:328.13px;font-size:17.5px;font-weight:400;color:#90c5f0;letter-spacing:0.75px;-webkit-text-stroke:0.45px #90c5f0">1090 - Geld-Transferkonto</div><div class="t" style="left:1272.5px;top:357.83px;font-size:19.5px;font-weight:400;color:#252423;letter-spacing:-0.1px;">-1.880,00</div><div style="position:absolute;left:1256px;top:405.80px;width:3px;height:54.6px;background:#bab7b4"></div><div class="t" style="left:1272.2px;top:408.69px;font-size:17.5px;font-weight:400;color:#90c5f0;letter-spacing:0.75px;-webkit-text-stroke:0.45px #90c5f0">1100 - Kundenguthaben Inland</div><div class="t" style="left:1272.5px;top:438.39px;font-size:19.5px;font-weight:400;color:#252423;letter-spacing:-0.1px;">2.632.567,17</div><div style="position:absolute;left:1256px;top:486.36px;width:3px;height:54.6px;background:#bab7b4"></div><div class="t" style="left:1272.2px;top:489.25px;font-size:17.5px;font-weight:400;color:#90c5f0;letter-spacing:0.75px;-webkit-text-stroke:0.45px #90c5f0">1101 - Kundenguthaben EU</div><div class="t" style="left:1272.5px;top:518.95px;font-size:19.5px;font-weight:400;color:#252423;letter-spacing:-0.1px;">16.229,60</div><div style="position:absolute;left:1256px;top:566.92px;width:3px;height:54.6px;background:#bab7b4"></div><div class="t" style="left:1272.2px;top:569.81px;font-size:17.5px;font-weight:400;color:#90c5f0;letter-spacing:0.75px;-webkit-text-stroke:0.45px #90c5f0">1102 - Kundenguthaben Ausland</div><div class="t" style="left:1272.5px;top:599.51px;font-size:19.5px;font-weight:400;color:#252423;letter-spacing:-0.1px;">173.443,78</div><div style="position:absolute;left:1256px;top:647.48px;width:3px;height:54.6px;background:#bab7b4"></div><div class="t" style="left:1272.2px;top:650.37px;font-size:17.5px;font-weight:400;color:#90c5f0;letter-spacing:0.75px;-webkit-text-stroke:0.45px #90c5f0">1170 - Vorsteuer Mat./DL</div><div class="t" style="left:1272.5px;top:680.07px;font-size:19.5px;font-weight:400;color:#252423;letter-spacing:-0.1px;">65.677,14</div><div style="position:absolute;left:1256px;top:728.04px;width:3px;height:54.6px;background:#bab7b4"></div><div class="t" style="left:1272.2px;top:730.93px;font-size:17.5px;font-weight:400;color:#90c5f0;letter-spacing:0.75px;-webkit-text-stroke:0.45px #90c5f0">1171 - Vorst.-EK-Rechn./Betriebsaufw.</div><div class="t" style="left:1272.5px;top:760.63px;font-size:19.5px;font-weight:400;color:#252423;letter-spacing:-0.1px;">78.162,52</div></div><div style="position:absolute;left:1809.6px;top:207.7px;width:10.8px;height:268.5px;background:#d9d7d5"></div>
</body></html>
